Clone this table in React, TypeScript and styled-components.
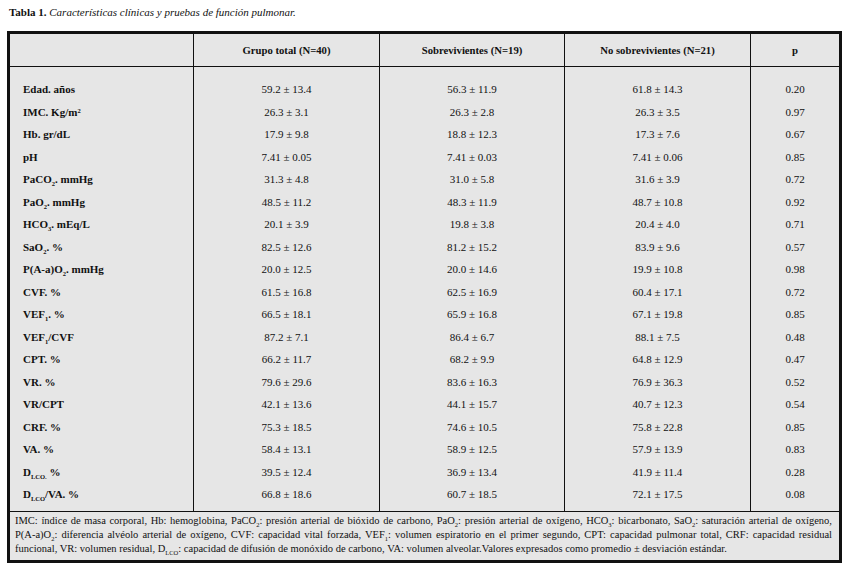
import React from "react";
import styled, { createGlobalStyle } from "styled-components";

const GlobalStyle = createGlobalStyle`
  body {
    margin: 0;
    background: #fff;
    color: #111;
  }
`;

const serif = `"Liberation Serif", "Times New Roman", Times, "DejaVu Serif", serif`;

const Page = styled.div`
  padding: 5px 6px 0 7px;
  font-family: ${serif};
`;

const Title = styled.div`
  font-size: 11px;
  line-height: 14px;
  padding-left: 2px;
  margin-bottom: 12px;
  b {
    font-weight: bold;
  }
  i {
    font-style: italic;
  }
`;

const Frame = styled.div`
  width: 835px;
  box-sizing: border-box;
  border: 3px solid #111;
  background: #e6e6e6;
`;

const Table = styled.table`
  width: 100%;
  table-layout: fixed;
  border-collapse: separate;
  border-spacing: 0;
  font-family: ${serif};
  font-size: 11px;
`;

const Head = styled.th`
  height: 32px;
  padding: 0;
  font-weight: bold;
  font-size: 10.7px;
  text-align: center;
  vertical-align: middle;
  border-bottom: 1px solid #111;
  & + & {
    border-left: 1px solid #111;
  }
`;

const Row = styled.tr<{ $first?: boolean; $last?: boolean }>`
  td {
    height: 22.5px;
    padding: ${(p) => (p.$first ? "11px" : "0")} 0 ${(p) => (p.$last ? "5px" : "0")};
  }
`;

const Label = styled.td`
  font-weight: bold;
  text-align: left;
  padding-left: 13px !important;
  white-space: nowrap;
`;

const Value = styled.td`
  text-align: center;
  border-left: 1px solid #111;
  white-space: nowrap;
`;

const Sub = styled.sub`
  font-size: 6.5px;
  vertical-align: -3px;
  line-height: 0;
`;

const Sup = styled.sup`
  font-size: 6.5px;
  vertical-align: 3px;
  line-height: 0;
`;

const Notes = styled.div`
  border-top: 1px solid #111;
  padding: 2px 7px 4px 5px;
  font-size: 10.5px;
  line-height: 14px;
`;

const NoteLine = styled.div<{ $last?: boolean }>`
  text-align: ${(p) => (p.$last ? "left" : "justify")};
  text-align-last: ${(p) => (p.$last ? "left" : "justify")};
  white-space: nowrap;
`;

type Item = {
  label: React.ReactNode;
  total: string;
  alive: string;
  dead: string;
  p: string;
};

const rows: Item[] = [
  { label: "Edad. años", total: "59.2 ± 13.4", alive: "56.3 ± 11.9", dead: "61.8 ± 14.3", p: "0.20" },
  { label: <>IMC. Kg/m<Sup>2</Sup></>, total: "26.3 ± 3.1", alive: "26.3 ± 2.8", dead: "26.3 ± 3.5", p: "0.97" },
  { label: "Hb. gr/dL", total: "17.9 ± 9.8", alive: "18.8 ± 12.3", dead: "17.3 ± 7.6", p: "0.67" },
  { label: "pH", total: "7.41 ± 0.05", alive: "7.41 ± 0.03", dead: "7.41 ± 0.06", p: "0.85" },
  { label: <>PaCO<Sub>2</Sub>. mmHg</>, total: "31.3 ± 4.8", alive: "31.0 ± 5.8", dead: "31.6 ± 3.9", p: "0.72" },
  { label: <>PaO<Sub>2</Sub>. mmHg</>, total: "48.5 ± 11.2", alive: "48.3 ± 11.9", dead: "48.7 ± 10.8", p: "0.92" },
  { label: <>HCO<Sub>3</Sub>. mEq/L</>, total: "20.1 ± 3.9", alive: "19.8 ± 3.8", dead: "20.4 ± 4.0", p: "0.71" },
  { label: <>SaO<Sub>2</Sub>. %</>, total: "82.5 ± 12.6", alive: "81.2 ± 15.2", dead: "83.9 ± 9.6", p: "0.57" },
  { label: <>P(A-a)O<Sub>2</Sub>. mmHg</>, total: "20.0 ± 12.5", alive: "20.0 ± 14.6", dead: "19.9 ± 10.8", p: "0.98" },
  { label: "CVF. %", total: "61.5 ± 16.8", alive: "62.5 ± 16.9", dead: "60.4 ± 17.1", p: "0.72" },
  { label: <>VEF<Sub>1</Sub>. %</>, total: "66.5 ± 18.1", alive: "65.9 ± 16.8", dead: "67.1 ± 19.8", p: "0.85" },
  { label: <>VEF<Sub>1</Sub>/CVF</>, total: "87.2 ± 7.1", alive: "86.4 ± 6.7", dead: "88.1 ± 7.5", p: "0.48" },
  { label: "CPT. %", total: "66.2 ± 11.7", alive: "68.2 ± 9.9", dead: "64.8 ± 12.9", p: "0.47" },
  { label: "VR. %", total: "79.6 ± 29.6", alive: "83.6 ± 16.3", dead: "76.9 ± 36.3", p: "0.52" },
  { label: "VR/CPT", total: "42.1 ± 13.6", alive: "44.1 ± 15.7", dead: "40.7 ± 12.3", p: "0.54" },
  { label: "CRF. %", total: "75.3 ± 18.5", alive: "74.6 ± 10.5", dead: "75.8 ± 22.8", p: "0.85" },
  { label: "VA. %", total: "58.4 ± 13.1", alive: "58.9 ± 12.5", dead: "57.9 ± 13.9", p: "0.83" },
  { label: <>D<Sub>LCO.</Sub> %</>, total: "39.5 ± 12.4", alive: "36.9 ± 13.4", dead: "41.9 ± 11.4", p: "0.28" },
  { label: <>D<Sub>LCO</Sub>/VA. %</>, total: "66.8 ± 18.6", alive: "60.7 ± 18.5", dead: "72.1 ± 17.5", p: "0.08" },
];

const App: React.FC = () => {
  return (
    <Page>
      <GlobalStyle />
      <Title>
        <b>Tabla 1.</b> <i>Características clínicas y pruebas de función pulmonar.</i>
      </Title>
      <Frame>
        <Table>
          <colgroup>
            <col style={{ width: 183 }} />
            <col style={{ width: 186 }} />
            <col style={{ width: 185 }} />
            <col style={{ width: 186 }} />
            <col />
          </colgroup>
          <thead>
            <tr>
              <Head />
              <Head>Grupo total (N=40)</Head>
              <Head>Sobrevivientes (N=19)</Head>
              <Head>No sobrevivientes (N=21)</Head>
              <Head>p</Head>
            </tr>
          </thead>
          <tbody>
            {rows.map((r, i) => (
              <Row key={i} $first={i === 0} $last={i === rows.length - 1}>
                <Label>{r.label}</Label>
                <Value>{r.total}</Value>
                <Value>{r.alive}</Value>
                <Value>{r.dead}</Value>
                <Value>{r.p}</Value>
              </Row>
            ))}
          </tbody>
        </Table>
        <Notes>
          <NoteLine>
            IMC: índice de masa corporal, Hb: hemoglobina, PaCO<Sub>2</Sub>: presión arterial de bióxido de carbono, PaO<Sub>2</Sub>: presión arterial de oxígeno, HCO<Sub>3</Sub>: bicarbonato, SaO<Sub>2</Sub>: saturación arterial de oxígeno,
          </NoteLine>
          <NoteLine>
            P(A-a)O<Sub>2</Sub>: diferencia alvéolo arterial de oxígeno, CVF: capacidad vital forzada, VEF<Sub>1</Sub>: volumen espiratorio en el primer segundo, CPT: capacidad pulmonar total, CRF: capacidad residual
          </NoteLine>
          <NoteLine $last>
            funcional, VR: volumen residual, D<Sub>LCO</Sub>: capacidad de difusión de monóxido de carbono, VA: volumen alveolar.Valores expresados como promedio ± desviación estándar.
          </NoteLine>
        </Notes>
      </Frame>
    </Page>
  );
};

export default App;
